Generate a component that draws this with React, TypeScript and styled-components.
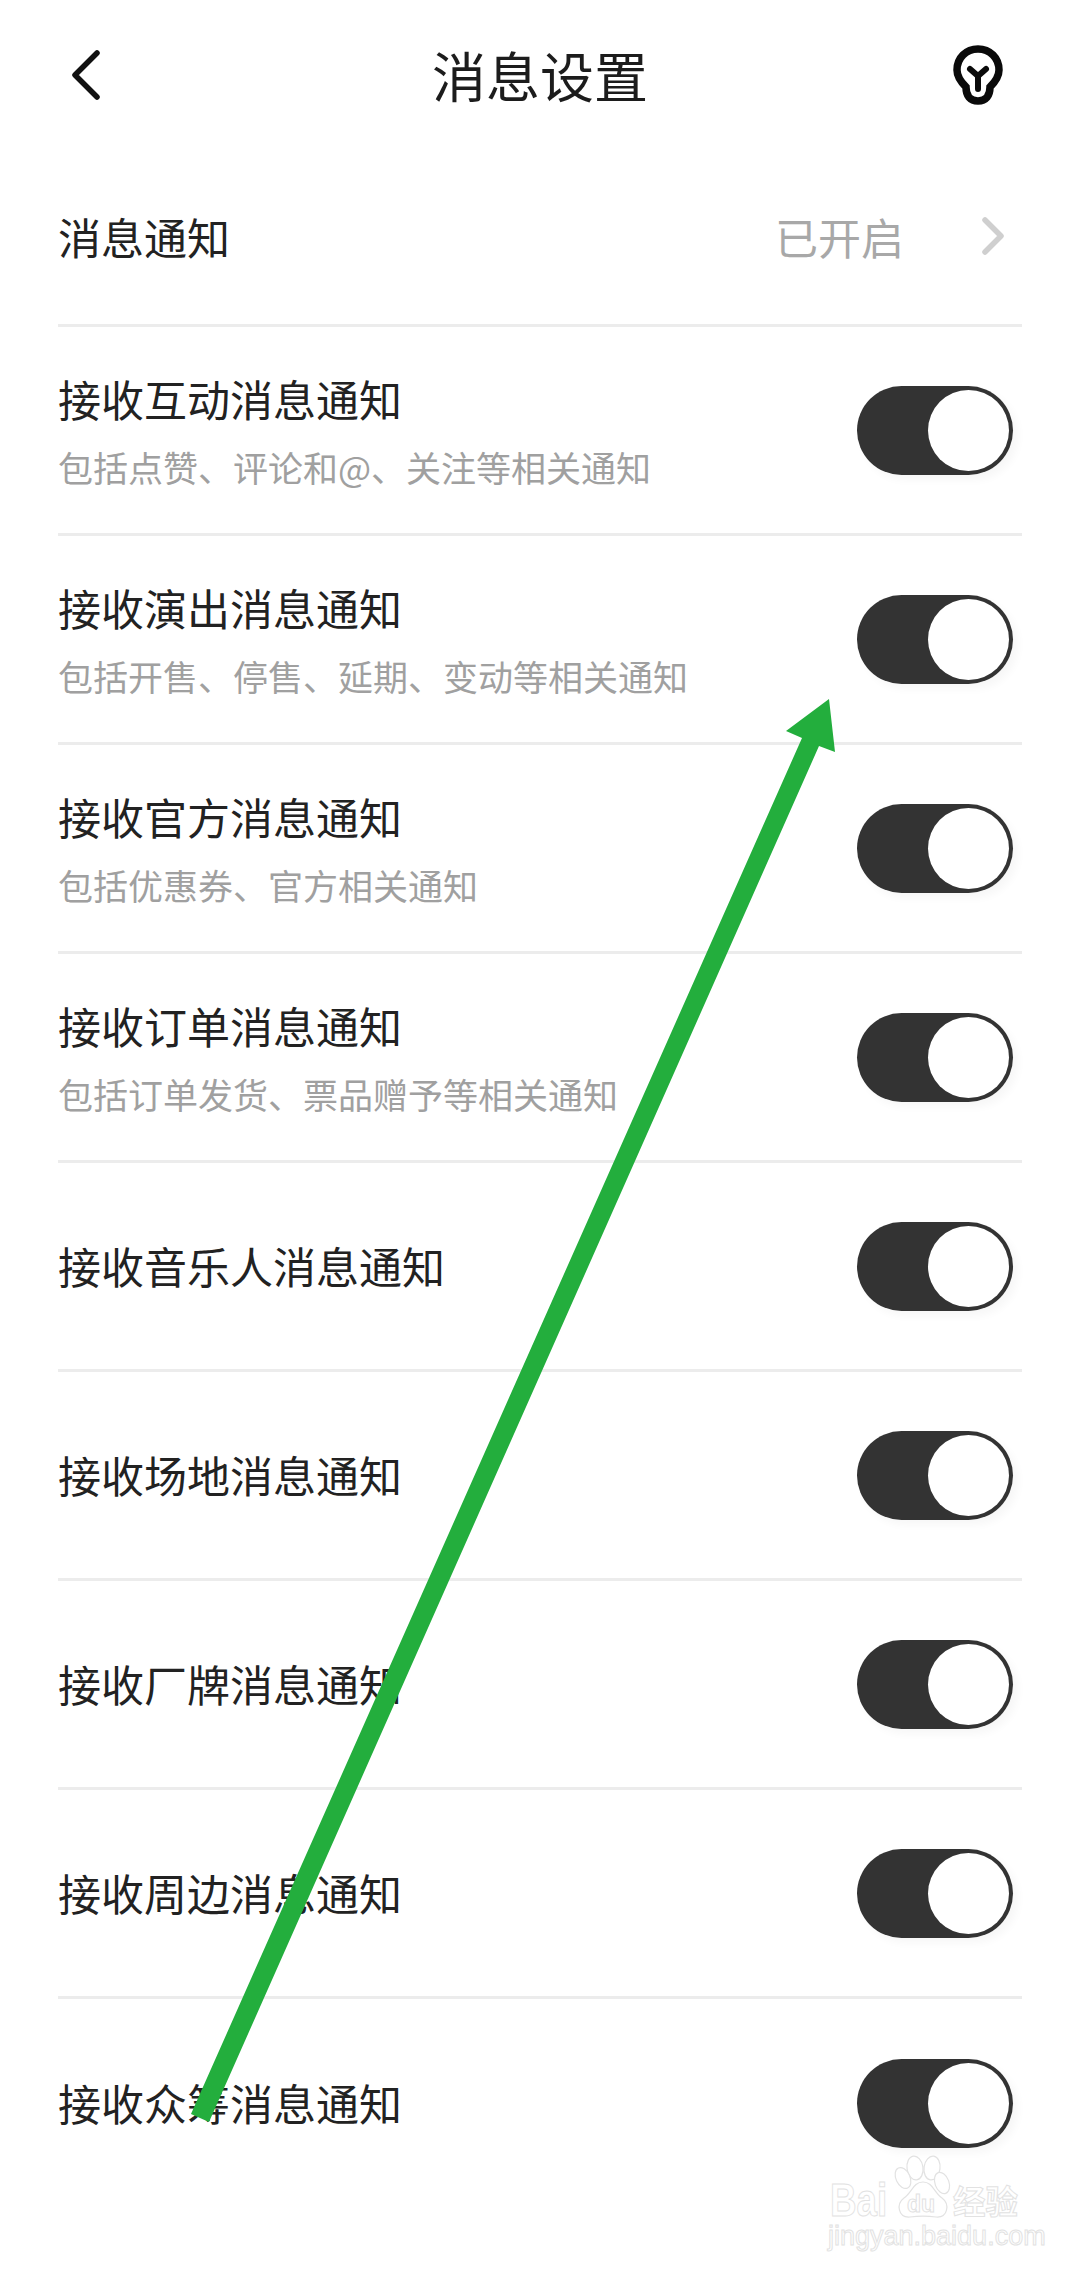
import styled, { createGlobalStyle } from "styled-components";

const GlobalStyle = createGlobalStyle`
  html, body {
    margin: 0;
    padding: 0;
    background: #fff;
  }

  * {
    box-sizing: border-box;
  }
`;

const Page = styled.div`
  position: relative;
  width: 1080px;
  height: 2271px;
  overflow: hidden;
  background: #fff;
  color: #222;
  font-family: "Noto Sans CJK SC", "Noto Sans", sans-serif;
`;

const Header = styled.header`
  height: 150px;
  padding: 0 77px 0 70px;
  display: grid;
  grid-template-columns: 1fr auto 1fr;
  align-items: center;
`;

const Title = styled.h1`
  margin: 0 0 0 7px;
  font-size: 54px;
  line-height: 70px;
  font-weight: 400;
  color: #1c1c1c;
`;

const HeaderIcon = styled.svg<{ $end?: boolean }>`
  display: block;
  justify-self: ${(props) => (props.$end ? "end" : "start")};
`;

const List = styled.ul`
  margin: 0 58px;
  padding: 0;
  list-style: none;
`;

const Row = styled.li<{ $height: number }>`
  height: ${(props) => props.$height}px;
  display: flex;
  align-items: center;
  justify-content: space-between;
  border-bottom: 3px solid #ececec;

  &:last-of-type {
    border-bottom: 0;
  }
`;

const RowText = styled.div<{ $hasSub?: boolean }>`
  display: flex;
  flex-direction: column;
  gap: 18px;
  padding-bottom: ${(props) => (props.$hasSub ? 0 : 3)}px;
`;

const Label = styled.div`
  font-size: 43px;
  line-height: 56px;
  color: #222;
`;

const Sub = styled.div`
  font-size: 35px;
  line-height: 46px;
  color: #a0a0a0;
`;

const Status = styled.div`
  display: flex;
  align-items: center;
  gap: 78px;
  padding: 0 18px 3px 0;
  font-size: 43px;
  line-height: 56px;
  color: #a8a8a8;
`;

const Toggle = styled.div`
  width: 156px;
  height: 89px;
  margin-right: 9px;
  padding: 4px;
  display: flex;
  justify-content: flex-end;
  border-radius: 45px;
  background: #333;
  box-shadow: 5px 5px 8px rgba(0, 0, 0, 0.035);
`;

const Thumb = styled.span`
  width: 81px;
  height: 81px;
  border-radius: 50%;
  background: #fff;
`;

const ArrowOverlay = styled.svg`
  position: absolute;
  left: 0;
  top: 0;
  pointer-events: none;
`;

const Watermark = styled.div`
  position: absolute;
  left: 828px;
  top: 2155px;
  width: 196px;
  height: 96px;
  color: #fff;
  -webkit-text-stroke: 1px #e2e2e2;
  font-family: "Liberation Sans", Arial, sans-serif;
`;

const Paw = styled.svg`
  position: absolute;
  left: 0;
  top: 0;
`;

const MarkBai = styled.span`
  position: absolute;
  left: 2px;
  top: 27px;
  font-size: 46px;
  line-height: 36px;
  font-weight: 700;
  transform: scaleX(0.8);
  transform-origin: left center;
`;

const MarkDu = styled.span`
  position: absolute;
  left: 79px;
  top: 37px;
  font-size: 23px;
  line-height: 24px;
  font-weight: 700;
`;

const MarkCn = styled.span`
  position: absolute;
  left: 125px;
  top: 25px;
  font-family: "Noto Sans CJK SC", sans-serif;
  font-size: 32.5px;
  line-height: 40px;
  font-weight: 700;
  white-space: nowrap;
`;

const MarkUrl = styled.span`
  position: absolute;
  left: 0;
  top: 66px;
  font-size: 27px;
  line-height: 30px;
  white-space: nowrap;
`;

const rows = [
  { label: "接收互动消息通知", sub: "包括点赞、评论和@、关注等相关通知" },
  { label: "接收演出消息通知", sub: "包括开售、停售、延期、变动等相关通知" },
  { label: "接收官方消息通知", sub: "包括优惠券、官方相关通知" },
  { label: "接收订单消息通知", sub: "包括订单发货、票品赠予等相关通知" },
  { label: "接收音乐人消息通知" },
  { label: "接收场地消息通知" },
  { label: "接收厂牌消息通知" },
  { label: "接收周边消息通知" },
  { label: "接收众筹消息通知" },
];

const App = () => {
  return (
    <Page>
      <GlobalStyle />
      <Header>
        <HeaderIcon width="34" height="54" viewBox="0 0 34 54">
          <path
            d="M27 5 L5 27 L27 49"
            fill="none"
            stroke="#111"
            strokeWidth="5.5"
            strokeLinecap="round"
            strokeLinejoin="round"
          />
        </HeaderIcon>
        <Title>消息设置</Title>
        <HeaderIcon $end width="50" height="60" viewBox="0 0 50 60">
          <path
            d="M25 4 C13 4 4 13 4 25 C4 32 8 37 13 42 C13 51 17 56 25 56 C33 56 37 51 37 42 C42 37 46 32 46 25 C46 13 37 4 25 4 Z"
            fill="none"
            stroke="#0a0a0a"
            strokeWidth="7.5"
          />
          <path
            d="M17 24 L25 31 L33 24 M25 31 L25 44"
            fill="none"
            stroke="#0a0a0a"
            strokeWidth="6"
            strokeLinecap="round"
            strokeLinejoin="round"
          />
        </HeaderIcon>
      </Header>

      <List>
        <Row $height={177}>
          <RowText>
            <Label>消息通知</Label>
          </RowText>
          <Status>
            已开启
            <svg width="22" height="38" viewBox="0 0 22 38">
              <path
                d="M3 3 L19 19 L3 35"
                fill="none"
                stroke="#cfcfcf"
                strokeWidth="5.5"
                strokeLinecap="round"
                strokeLinejoin="round"
              />
            </svg>
          </Status>
        </Row>
        {rows.map((row) => (
          <Row key={row.label} $height={209}>
            <RowText $hasSub={!!row.sub}>
              <Label>{row.label}</Label>
              {row.sub && <Sub>{row.sub}</Sub>}
            </RowText>
            <Toggle>
              <Thumb />
            </Toggle>
          </Row>
        ))}
      </List>

      <ArrowOverlay width="1080" height="2271" viewBox="0 0 1080 2271">
        <polygon
          points="829,699 835,752 819,746 209,2122 191,2114 802,738 786,731"
          fill="#23ae3d"
        />
      </ArrowOverlay>

      <Watermark>
        <Paw width="196" height="70" viewBox="0 0 196 70">
          <g fill="#fff" stroke="#e2e2e2" strokeWidth="1.2">
            <ellipse cx="87" cy="13" rx="8" ry="12" transform="rotate(-8 87 13)" />
            <ellipse cx="104" cy="13" rx="8" ry="12" transform="rotate(8 104 13)" />
            <ellipse cx="75" cy="23" rx="7" ry="11" transform="rotate(-25 75 23)" />
            <ellipse cx="114" cy="28" rx="7" ry="11" transform="rotate(-20 114 28)" />
            <path d="M95 27 C85 27 84 38 76 43 C68 49 70 63 82 62 C90 61 100 61 108 62 C120 63 122 49 114 43 C106 38 105 27 95 27 Z" />
          </g>
        </Paw>
        <MarkBai>Bai</MarkBai>
        <MarkDu>du</MarkDu>
        <MarkCn>经验</MarkCn>
        <MarkUrl>jingyan.baidu.com</MarkUrl>
      </Watermark>
    </Page>
  );
};

export default App;
